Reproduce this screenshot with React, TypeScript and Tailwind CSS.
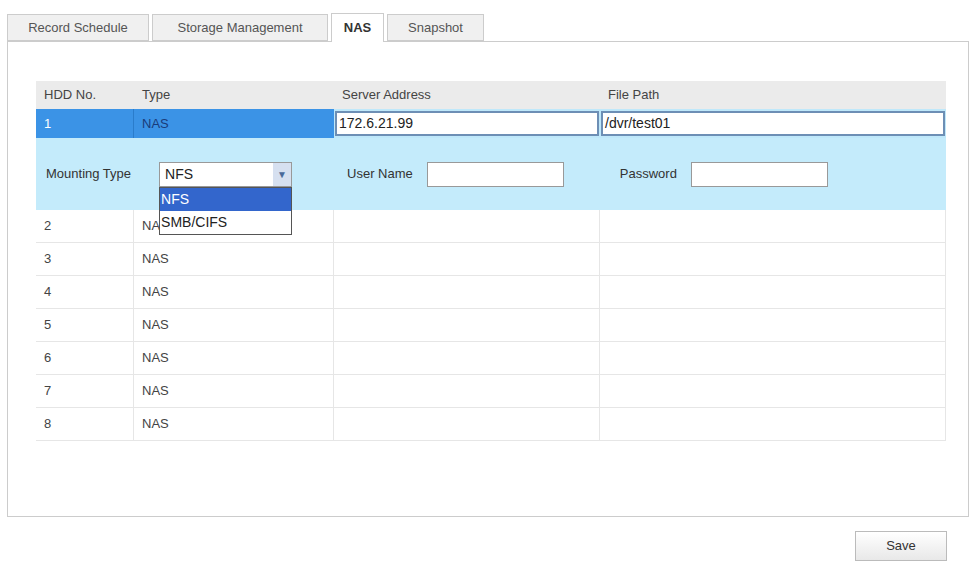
const ROWS = [2, 3, 4, 5, 6, 7, 8];

export default function App() {
  return (
    <div className="relative h-[564px] w-[976px] bg-white text-[13px] text-[#444]" style={{ fontFamily: 'Arial, "Liberation Sans", sans-serif' }}>
      {/* Tabs */}
      <div className="flex items-end gap-[3px] px-[7px] pt-[13px]">
        <div className="flex h-[27px] w-[142px] items-center justify-center border border-[#ccc] bg-[#f0f0f0] text-[#555]">Record Schedule</div>
        <div className="flex h-[27px] w-[176px] items-center justify-center border border-[#ccc] bg-[#f0f0f0] text-[#555]">Storage Management</div>
        <div className="relative z-10 -mb-px flex h-[29px] w-[53px] items-center justify-center border border-b-0 border-[#ccc] bg-white font-bold text-[#333]">NAS</div>
        <div className="flex h-[27px] w-[97px] items-center justify-center border border-[#ccc] bg-[#f0f0f0] text-[#555]">Snapshot</div>
      </div>

      {/* Panel */}
      <div className="mx-[7px] h-[476px] border border-[#ccc] px-[28px] pt-[39px]">
        <div className="w-[910px]">
          <div className="grid h-[28px] grid-cols-[98px_200px_266px_346px] items-center bg-[#ebebeb] text-[#444]">
            <div className="pl-[8px]">HDD No.</div>
            <div className="pl-[8px]">Type</div>
            <div className="pl-[8px]">Server Address</div>
            <div className="pl-[8px]">File Path</div>
          </div>
          <div className="grid h-[29px] grid-cols-[98px_200px_266px_346px] items-center bg-[#bfe8fa]">
            <div className="flex h-full items-center border-r border-[#2a7ccb] bg-[#3b93e6] pl-[8px] text-white">1</div>
            <div className="flex h-full items-center bg-[#3b93e6] pl-[8px] text-[#1a3c7a]">NAS</div>
            <div className="px-[1px]"><div className="flex h-[25px] items-center border-2 border-[#6d8fb5] bg-white pl-[2px] text-[14px] text-[#222]">172.6.21.99</div></div>
            <div className="px-[1px]"><div className="flex h-[25px] items-center border-2 border-[#6d8fb5] bg-white pl-[2px] text-[14px] text-[#222]">/dvr/test01</div></div>
          </div>
          <div className="relative flex h-[72px] items-center bg-[#c4ebfb] text-[13px] text-[#333]">
            <span className="ml-[10px]">Mounting Type</span>
            <div className="relative ml-[28px]">
              <div className="flex h-[25px] w-[133px] items-center justify-between border border-[#999] bg-white pl-[5px] text-[14px] text-[#222]">
                NFS
                <span className="flex h-full w-[18px] items-center justify-center bg-[#d6e0f0] text-[10px] text-[#4a6a9a]">▼</span>
              </div>
              <div className="absolute left-0 top-[25px] z-20 w-[133px] border border-[#555] bg-white text-[14px] leading-[23px]">
                <div className="bg-[#3366cc] pl-[1px] text-white">NFS</div>
                <div className="pl-[1px] text-[#222]">SMB/CIFS</div>
              </div>
            </div>
            <span className="ml-[55px]">User Name</span>
            <div className="ml-[14px] h-[25px] w-[137px] border border-[#999] bg-white" />
            <span className="ml-[56px]">Password</span>
            <div className="ml-[14px] h-[25px] w-[137px] border border-[#999] bg-white" />
          </div>
          {ROWS.map((n) => (
            <div key={n} className="grid h-[33px] grid-cols-[98px_200px_266px_346px] items-center border-b border-[#e6e6e6] text-[13px]">
              <div className="flex h-full items-center border-r border-[#e6e6e6] pl-[8px]">{n}</div>
              <div className="flex h-full items-center border-r border-[#e6e6e6] pl-[8px]">NAS</div>
              <div className="h-full border-r border-[#e6e6e6]" />
              <div className="h-full border-r border-[#e6e6e6]" />
            </div>
          ))}
        </div>
      </div>

      <div className="flex justify-end pr-[29px] pt-[14px]">
        <button className="h-[30px] w-[92px] border border-[#bbb] bg-gradient-to-b from-white to-[#e8e8e8] text-[13px] text-[#333]">Save</button>
      </div>
    </div>
  );
}
